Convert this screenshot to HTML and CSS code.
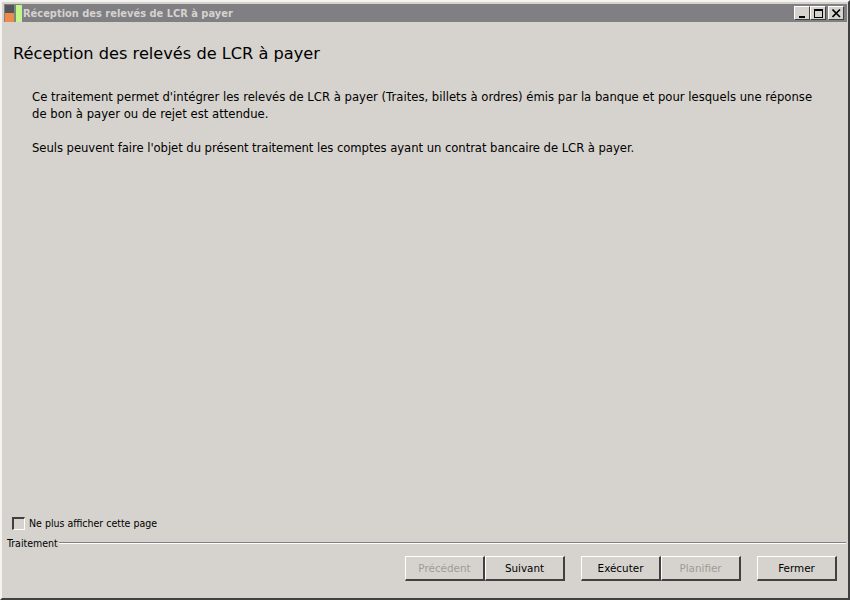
FILE: index.html
```html
<!DOCTYPE html>
<html lang="fr">
<head>
<meta charset="utf-8">
<title>Réception des relevés de LCR à payer</title>
<link rel="stylesheet" href="styles.css">
</head>
<body>
<div class="window">
  <header class="titlebar">
    <svg class="app-icon" width="17" height="17" viewBox="0 0 17 17" aria-hidden="true">
      <rect x="0" y="0" width="9" height="8" fill="#55565a"/>
      <rect x="0" y="8" width="9" height="9" fill="#f08a4b"/>
      <rect x="9" y="0" width="2" height="17" fill="#6f8f7a"/>
      <rect x="11" y="0" width="6" height="17" fill="#c4f58a"/>
    </svg>
    <span class="title-text">Réception des relevés de LCR à payer</span>
    <div class="win-buttons">
      <button class="win-btn" aria-label="Réduire"><svg width="9" height="9" viewBox="0 0 9 9"><rect x="1" y="7" width="6" height="2" fill="#000"/></svg></button>
      <button class="win-btn" aria-label="Agrandir"><svg width="9" height="9" viewBox="0 0 9 9"><path d="M0 0h9v9H0zM1 2v6h7V2z" fill="#000" fill-rule="evenodd"/></svg></button>
      <button class="win-btn win-close" aria-label="Fermer"><svg width="9" height="9" viewBox="0 0 9 9"><path d="M0.5 0.5L8 8M8 0.5L0.5 8" stroke="#000" stroke-width="1.6"/></svg></button>
    </div>
  </header>
  <main class="content">
    <h1 class="page-title">Réception des relevés de LCR à payer</h1>
    <div class="description">
      <p>Ce traitement permet d'intégrer les relevés de LCR à payer (Traites, billets à ordres) émis par la banque et pour lesquels une réponse<br>de bon à payer ou de rejet est attendue.</p>
      <p class="tight">Seuls peuvent faire l'objet du présent traitement les comptes ayant un contrat bancaire de LCR à payer.</p>
    </div>
  </main>
  <label class="hide-page"><span class="checkbox"></span><span>Ne plus afficher cette page</span></label>
  <div class="group-label"><span>Traitement</span><span class="group-rule"></span></div>
  <footer class="actions">
    <div class="btn-group">
      <button class="btn" disabled>Précédent</button>
      <button class="btn">Suivant</button>
    </div>
    <div class="btn-group">
      <button class="btn">Exécuter</button>
      <button class="btn" disabled>Planifier</button>
    </div>
    <button class="btn">Fermer</button>
  </footer>
</div>
</body>
</html>
```
FILE: styles.css
```css
* { box-sizing: border-box; }
html, body { margin: 0; padding: 0; }
body {
  width: 850px;
  height: 600px;
  overflow: hidden;
  background: #d6d3ce;
  font-family: "DejaVu Sans", sans-serif;
  color: #000;
}
.window {
  width: 850px;
  height: 600px;
  display: flex;
  flex-direction: column;
  background: #d6d3ce;
  border-style: solid;
  border-width: 2px;
  border-color: #f4f3f0 #404040 #404040 #f4f3f0;
  padding: 2px 1px 0 2px;
}
.titlebar {
  height: 18px;
  flex: none;
  display: flex;
  align-items: center;
  background: #7f7f84;
  padding-left: 1px;
  padding-right: 3px;
}
.app-icon { flex: none; margin-right: 1px; }
.title-text {
  font-size: 9.9px;
  font-weight: bold;
  color: #d6d3ce;
  white-space: nowrap;
}
.win-buttons { margin-left: auto; display: flex; }
.win-btn {
  width: 16px;
  height: 14px;
  padding: 0;
  display: flex;
  align-items: center;
  justify-content: center;
  background: #d6d3ce;
  border-style: solid;
  border-width: 1px;
  border-color: #fff #404040 #404040 #fff;
}
.win-close { margin-left: 2px; }
.content { flex: 1; padding: 0 9px; }
.page-title {
  margin: 21px 0 0;
  font-size: 16.2px;
  line-height: 22px;
  font-weight: normal;
}
.description { padding: 24px 0 0 19px; font-size: 11.65px; line-height: 17px; }
.description p { margin: 0 0 16px; white-space: nowrap; }
.description .tight { margin-top: 17px; letter-spacing: -0.06px; }
.hide-page {
  display: flex;
  align-items: center;
  gap: 4px;
  margin: 0 0 6px 8px;
  height: 14px;
  font-family: "DejaVu Sans Condensed", "DejaVu Sans", sans-serif;
  font-size: 10.5px;
}
.checkbox {
  width: 13px;
  height: 13px;
  background: #d6d3ce;
  border-style: solid;
  border-width: 2px 1px 1px 2px;
  border-color: #404040 #fff #fff #404040;
}
.group-label {
  display: flex;
  align-items: center;
  height: 14px;
  margin-left: 3px;
  margin-right: 1px;
  font-family: "DejaVu Sans Condensed", "DejaVu Sans", sans-serif;
  font-size: 10.5px;
}
.group-rule {
  flex: 1;
  height: 2px;
  background: linear-gradient(#808080 50%, #fff 50%);
  margin-left: 1px;
}
.actions {
  display: flex;
  justify-content: flex-end;
  gap: 16px;
  height: 48px;
  padding: 6px 10px 0 0;
  flex: none;
}
.btn-group { display: flex; }
.btn {
  width: 80px;
  height: 25px;
  padding: 0;
  font-family: "DejaVu Sans", sans-serif;
  font-size: 10.4px;
  color: #000;
  background: #d6d3ce;
  border-style: solid;
  border-width: 1px 2px 2px 1px;
  border-color: #fff #404040 #404040 #fff;
}
.btn:disabled { color: #a09c94; }
```
